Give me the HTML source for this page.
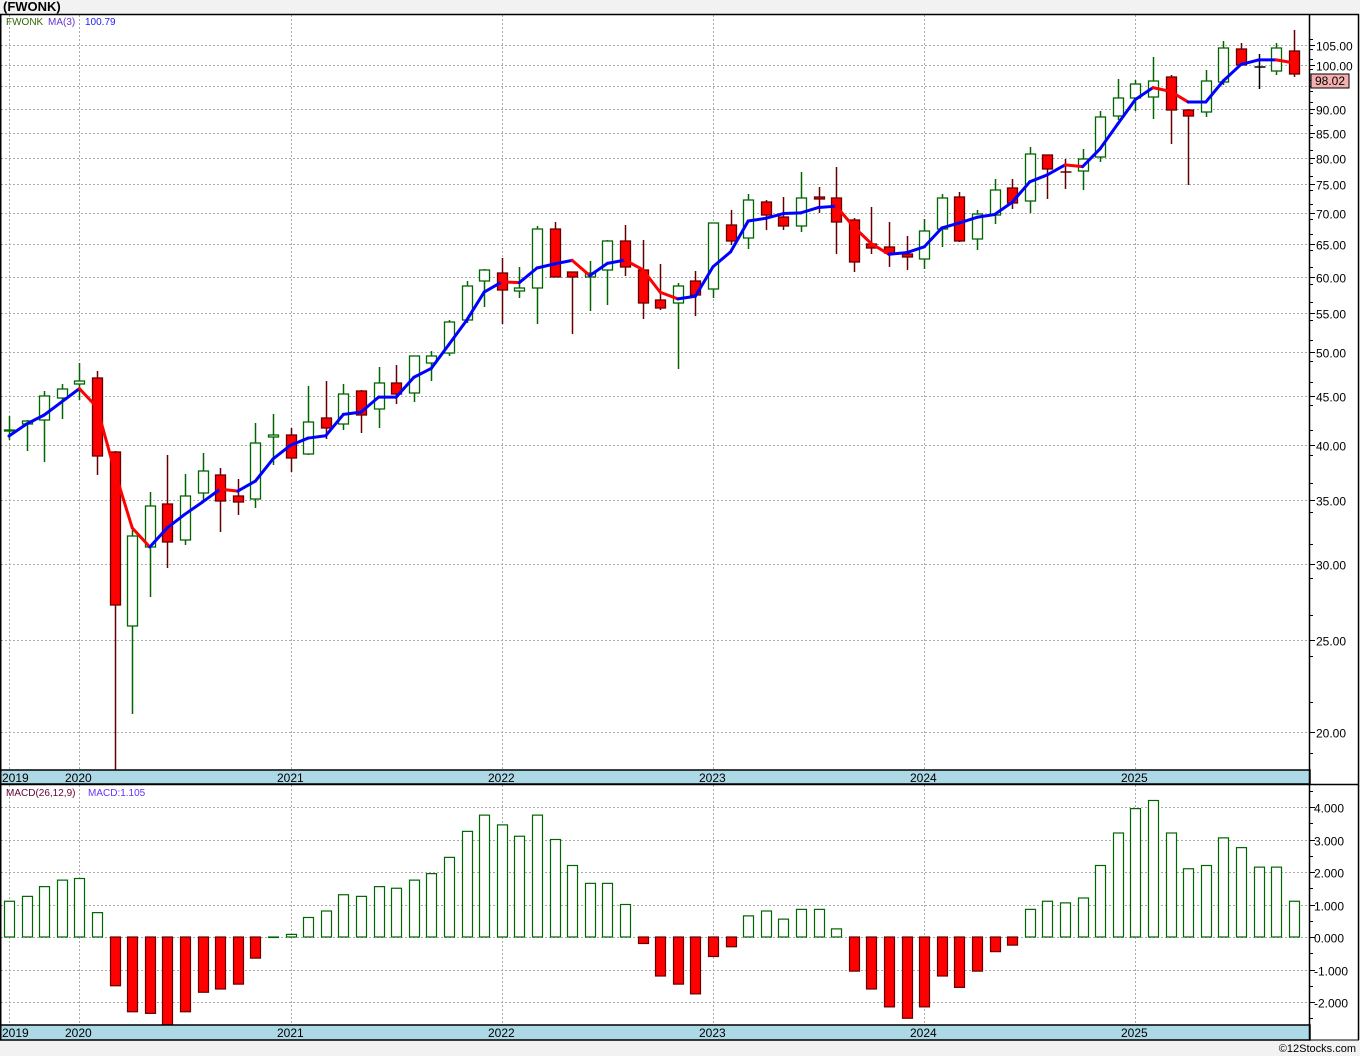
<!DOCTYPE html>
<html><head><meta charset="utf-8"><style>
html,body{margin:0;padding:0;background:#f2f2f2;}
body{width:1360px;height:1056px;overflow:hidden;position:relative;font-family:"Liberation Sans",sans-serif;}
svg{position:absolute;left:0;top:0;}
</style></head><body>
<svg id="s" width="1360" height="1056" xmlns="http://www.w3.org/2000/svg" font-family="Liberation Sans, sans-serif">
<rect x="0" y="14" width="1359" height="1026" fill="#fff"/>
<g id="grid"></g>
<g id="cand"></g>
<g id="ma"></g>
<g id="macd"></g>
<g id="axis"></g>
<rect x="0" y="770" width="1310" height="14" fill="#add8e6" stroke="#000" stroke-width="1.5"/>
<rect x="0" y="1025" width="1310" height="15" fill="#add8e6" stroke="#000" stroke-width="1.5"/>
<g font-size="12" fill="#000">
<text x="2" y="782">2019</text><text x="65" y="782">2020</text><text x="277" y="782">2021</text><text x="488" y="782">2022</text><text x="699" y="782">2023</text><text x="910" y="782">2024</text><text x="1121" y="782">2025</text>
<text x="2" y="1037">2019</text><text x="65" y="1037">2020</text><text x="277" y="1037">2021</text><text x="488" y="1037">2022</text><text x="699" y="1037">2023</text><text x="910" y="1037">2024</text><text x="1121" y="1037">2025</text>
</g>
<line x1="0.5" y1="14" x2="0.5" y2="1040" stroke="#000" stroke-width="2"/>
<line x1="0" y1="14.5" x2="1359" y2="14.5" stroke="#000" stroke-width="1.5"/>
<line x1="0" y1="784.5" x2="1359" y2="784.5" stroke="#000" stroke-width="1.5"/>
<line x1="1309.5" y1="14" x2="1309.5" y2="1040" stroke="#000" stroke-width="1.5"/>
<line x1="1358.5" y1="14" x2="1358.5" y2="1040" stroke="#000" stroke-width="1.5"/>
<line x1="0" y1="1040" x2="1359" y2="1040" stroke="#000" stroke-width="1"/>
<text x="3" y="11" font-size="13" font-weight="bold" fill="#000">(FWONK)</text>
<text x="6" y="25" font-size="10" fill="#336600">FWONK</text>
<text x="48" y="25" font-size="10" fill="#6633cc">MA(3)</text>
<text x="85" y="25" font-size="10" fill="#2222ee">100.79</text>
<text x="6" y="796" font-size="10" fill="#660033">MACD(26,12,9)</text>
<text x="88" y="796" font-size="10" fill="#6633ff">MACD:1.105</text>
<text x="1356" y="1052" font-size="11" fill="#000" text-anchor="end">©12Stocks.com</text>
<rect x="1311" y="74" width="38" height="14" fill="#f4b0b0" stroke="#000" stroke-width="1"/>
<text x="1315" y="85" font-size="12" fill="#000">98.02</text>
</svg>
<script>
var NS="http://www.w3.org/2000/svg";
function el(p,t,a){var e=document.createElementNS(NS,t);for(var k in a)e.setAttribute(k,a[k]);document.getElementById(p).appendChild(e);return e;}
function py(p){return 45+(Math.log(105)-Math.log(p))*414.3;}
function yp(y){return 105*Math.exp(-(y-45)/414.3);}
var vx=[9,79,291,502,713,924,1135];
vx.forEach(function(x){el("grid","line",{x1:x+.5,y1:15,x2:x+.5,y2:770,stroke:"#aaa","stroke-dasharray":"2,2"});el("grid","line",{x1:x+.5,y1:785,x2:x+.5,y2:1025,stroke:"#aaa","stroke-dasharray":"2,2"});});
var lv=[105,100,95,90,85,80,75,70,65,60,55,50,45,40,35,30,25,20];
lv.forEach(function(p){var y=Math.round(py(p))+.5;el("grid","line",{x1:1,y1:y,x2:1310,y2:y,stroke:"#aaa","stroke-dasharray":"2,2"});el("axis","line",{x1:1310,y1:y,x2:1315,y2:y,stroke:"#000"});
if(p!=95){var t=el("axis","text",{x:1316,y:y+5,"font-size":"12",fill:"#000"});t.textContent=p.toFixed(2);}});
for(var p=19;p<=108;p+=2.5){var y=Math.round(py(p))+.5;if(y>18&&y<770)el("axis","line",{x1:1310,y1:y,x2:1313,y2:y,stroke:"#000"});}
var D=[[430,416,440,430,'g'],[424,420,451,421,'g'],[420,391,462,396,'g'],[398,384,419,389,'g'],[384,363,400,381,'g'],[378,371,475,456,'r'],[452,451,775,605,'r'],[626,530,714,536,'g'],[547,492,597,506,'g'],[504,455,568,542,'r'],[540,474,545,496,'g'],[493,453,500,471,'g'],[475,468,532,501,'r'],[496,479,515,502,'r'],[499,423,508,443,'g'],[437,414,465,435,'g'],[435,428,472,458,'r'],[454,386,455,422,'g'],
[418,381,439,428,'r'],[424,384,430,394,'g'],[391,390,433,415,'r'],[409,367,428,383,'g'],[383,365,404,394,'r'],[393,362,402,356,'g'],[363,351,381,356,'g'],[353,320,356,322,'g'],[320,281,323,286,'g'],[281,269,307,270,'g'],[273,258,324,290,'r'],[291,267,298,288,'g'],[288,226,324,229,'g'],[229,222,277,277,'r'],[272,272,334,277,'r'],[277,261,311,273,'g'],[270,240,305,241,'g'],[241,225,276,267,'r'],[270,240,319,303,'r'],[300,264,310,308,'r'],[303,283,369,286,'g'],[281,271,316,295,'r'],
[289,223,298,223,'g'],[225,210,245,241,'r'],[238,194,249,200,'g'],[202,200,230,215,'r'],[217,197,230,226,'r'],[226,172,232,198,'g'],[197,187,213,199,'r'],[198,167,254,222,'r'],[220,218,272,262,'r'],[244,207,254,248,'r'],[247,222,267,253,'r'],[254,236,270,257,'r'],[259,219,269,231,'g'],[229,194,247,198,'g'],[197,192,242,241,'r'],[239,210,250,214,'g'],[215,179,224,190,'g'],[188,179,209,203,'r'],
[201,147,213,154,'g'],[155,155,199,169,'r'],[172,159,189,172,'d'],[171,149,190,159,'g'],[157,111,162,117,'g'],[116,79,120,98,'g'],[98,80,111,84,'g'],[97,57,119,81,'g'],[77,75,144,110,'r'],[110,109,185,116,'r'],[112,70,117,81,'g'],[82,41,85,48,'g'],[49,43,65,65,'r'],[67,54,89,67,'k'],[71,43,75,48,'g'],[51,30,77,74,'r']];
function X(i){return 9+i*17.6;}
D.forEach(function(d,i){var x=Math.round(X(i))+.5,o=d[0],h=d[1],l=d[2],c=d[3],t=d[4];
var top=Math.min(o,c),bot=Math.max(o,c);
if(t=='g'){el("cand","line",{x1:x,y1:h,x2:x,y2:l,stroke:"#006600","stroke-width":1.5});el("cand","rect",{x:x-5,y:top,width:10,height:Math.max(bot-top,1),fill:"#fff",stroke:"#006600","stroke-width":1.3});}
else if(t=='r'){el("cand","line",{x1:x,y1:h,x2:x,y2:l,stroke:"#660000","stroke-width":1.5});el("cand","rect",{x:x-5,y:top,width:10,height:Math.max(bot-top,1),fill:"#f00",stroke:"#660000","stroke-width":1.3});}
else{var col=t=='k'?"#000":"#660000";el("cand","line",{x1:x,y1:h,x2:x,y2:l,stroke:col,"stroke-width":1.5});el("cand","line",{x1:x-5,y1:o,x2:x+6,y2:o,stroke:col,"stroke-width":1.5});}});
var cl=D.map(function(d){return yp(d[3]);});
var ma=[];for(var i=0;i<cl.length;i++){var a=cl[Math.max(i-2,0)],b=cl[Math.max(i-1,0)];ma.push(py((a+b+cl[i])/3));}
ma[0]=436;ma[1]=424;ma[2]=415;
for(var i=1;i<ma.length;i++){var col=ma[i]>ma[i-1]+0.3?"#f00":"#0000ff";el("ma","line",{x1:X(i-1),y1:ma[i-1],x2:X(i),y2:ma[i],stroke:col,"stroke-width":3,"stroke-linecap":"round"});}
var M=[1.1,1.25,1.55,1.75,1.8,0.75,-1.5,-2.3,-2.35,-2.7,-2.3,-1.7,-1.6,-1.45,-0.65,0,0.08,0.6,0.8,1.3,1.25,1.55,1.5,1.75,1.95,2.45,3.25,3.75,3.45,3.1,3.75,3.0,2.2,1.65,1.65,1.0,-0.2,-1.2,-1.45,-1.75,-0.6,-0.3,0.65,0.8,0.55,0.85,0.85,0.25,-1.05,-1.6,-2.15,-2.5,-2.15,-1.2,-1.55,-1.05,-0.45,-0.25,0.85,1.1,1.05,1.2,2.2,3.2,3.95,4.2,3.2,2.1,2.2,3.05,2.75,2.15,2.15,1.1];
var Z=937,U=32.5;
[4,3,2,1,0,-1,-2].forEach(function(v){var y=Math.round(Z-v*U)+.5;el("grid","line",{x1:1,y1:y,x2:1310,y2:y,stroke:"#aaa","stroke-dasharray":"2,2"});el("axis","line",{x1:1310,y1:y,x2:1315,y2:y,stroke:"#000"});var t=el("axis","text",{x:1314,y:y+5,"font-size":"12",fill:"#000"});t.textContent=v.toFixed(3);});
for(var v=-3;v<=4.5;v+=0.5){var y=Math.round(Z-v*U)+.5;if(y>788&&y<1025)el("axis","line",{x1:1310,y1:y,x2:1313,y2:y,stroke:"#000"});}
M.forEach(function(v,i){var x=Math.round(X(i))-5+.5,y=Z-v*U;
if(v>=0)el("macd","rect",{x:x,y:y,width:10,height:Math.max(Z-y,0.5),fill:"#fff",stroke:"#006600","stroke-width":1.2});
else el("macd","rect",{x:x,y:Z,width:10,height:Math.min(y,1025)-Z,fill:"#f00",stroke:"#660000","stroke-width":1.2});});
</script>
</body></html>
